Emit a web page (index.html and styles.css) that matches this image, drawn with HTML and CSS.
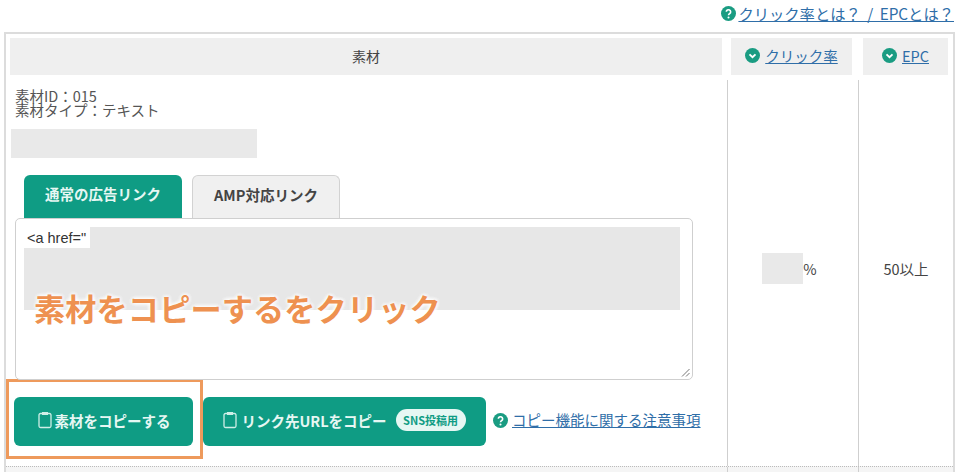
FILE: index.html
```html
<!DOCTYPE html>
<html lang="ja">
<head>
<meta charset="utf-8">
<title>素材</title>
<link rel="stylesheet" href="styles.css">
</head>
<body>
<div class="help-row">
  <svg class="qicon" viewBox="0 0 16 16"><circle cx="8" cy="8" r="8" fill="#1a9c82"/><path d="M5.7 6.2a2.3 2.2 0 1 1 3.6 1.8c-.9.6-1.3 1-1.3 1.9" fill="none" stroke="#fff" stroke-width="1.7"/><circle cx="8" cy="12.2" r="1.1" fill="#fff"/></svg>
  <a class="link" href="#">クリック率とは？ / EPCとは？</a>
</div>
<div class="panel">
  <div class="heads">
    <div class="head head-main">素材</div>
    <div class="head head-rate">
      <svg class="cicon" viewBox="0 0 16 16"><circle cx="8" cy="8" r="8" fill="#1a9c82"/><path d="M4.8 6.8 8 9.8l3.2-3" fill="none" stroke="#fff" stroke-width="2"/></svg>
      <a class="link" href="#">クリック率</a>
    </div>
    <div class="head head-epc">
      <svg class="cicon" viewBox="0 0 16 16"><circle cx="8" cy="8" r="8" fill="#1a9c82"/><path d="M4.8 6.8 8 9.8l3.2-3" fill="none" stroke="#fff" stroke-width="2"/></svg>
      <a class="link" href="#">EPC</a>
    </div>
  </div>
  <div class="body">
    <div class="col-main">
      <p class="meta">素材ID：015<br>素材タイプ：テキスト</p>
      <div class="redact-title"></div>
      <div class="tabs">
        <div class="tab tab-on">通常の広告リンク</div>
        <div class="tab tab-off">AMP対応リンク</div>
      </div>
      <div class="code">
        <span class="code-text">&lt;a href="</span>
        <div class="redact-code"></div>
        <svg class="grip" viewBox="0 0 10 10"><path d="M9.5 2 2 9.500M9.500 6 6 9.500" stroke="#777" stroke-width="1"/></svg>
      </div>
      <div class="callout">素材をコピーするをクリック</div>
      <div class="actions">
        <div class="copy-frame">
          <button class="btn btn-copy">
            <svg class="clip" viewBox="0 0 14 18"><path d="M4 2.500H2.500a1.500 1.500 0 0 0-1.500 1.500v11a1.500 1.500 0 0 0 1.500 1.500h9a1.500 1.500 0 0 0 1.500-1.500v-11a1.500 1.500 0 0 0-1.500-1.500H10" fill="none" stroke="#cfeee7" stroke-width="1.300"/><rect x="4" y="1" width="6" height="3" fill="#cfeee7"/></svg>
            素材をコピーする
          </button>
        </div>
        <button class="btn btn-link">
          <svg class="clip" viewBox="0 0 14 18"><path d="M4 2.500H2.500a1.500 1.500 0 0 0-1.500 1.500v11a1.500 1.500 0 0 0 1.500 1.500h9a1.500 1.500 0 0 0 1.500-1.500v-11a1.500 1.500 0 0 0-1.500-1.500H10" fill="none" stroke="#cfeee7" stroke-width="1.300"/><rect x="4" y="1" width="6" height="3" fill="#cfeee7"/></svg>
          リンク先URLをコピー
          <span class="pill">SNS投稿用</span>
        </button>
        <svg class="qicon" viewBox="0 0 16 16"><circle cx="8" cy="8" r="8" fill="#1a9c82"/><path d="M5.700 6.200a2.300 2.200 0 1 1 3.600 1.800c-.9.600-1.300 1-1.300 1.900" fill="none" stroke="#fff" stroke-width="1.700"/><circle cx="8" cy="12.200" r="1.100" fill="#fff"/></svg>
        <a class="link note" href="#">コピー機能に関する注意事項</a>
      </div>
    </div>
    <div class="col-rate"><span class="redact-rate"></span><span>%</span></div>
    <div class="col-epc">50以上</div>
  </div>
  <div class="foot">
    <div class="foot-main"></div>
    <div class="foot-rate"></div>
    <div class="foot-epc"></div>
  </div>
</div>
</body>
</html>
```

FILE: styles.css
```css
* { box-sizing: border-box; }
html, body { margin: 0; padding: 0; }
body {
  width: 960px;
  height: 472px;
  overflow: hidden;
  background: #fff;
  color: #444;
  font-family: "Noto Sans CJK JP", "Noto Sans", sans-serif;
  font-size: 14.5px;
}
.link { color: #2f6ea8; text-decoration: underline; }
.help-row {
  height: 32px;
  padding: 3px 6px 0 0;
  display: flex;
  justify-content: flex-end;
  align-items: flex-start;
  gap: 2px;
  font-size: 15.3px;
  word-spacing: 3px;
  line-height: 20px;
}
.qicon { width: 15px; height: 15px; flex: none; margin-top: 3px; }
.cicon { width: 15px; height: 15px; flex: none; }
.panel {
  margin-left: 4px;
  width: 951px;
  height: 440px;
  border: solid #dcdcdc;
  border-width: 2px 2px 0 2px;
}
.heads { display: flex; padding: 4px 4px 0 4px; height: 46px; }
.head {
  height: 37px;
  background: #efefef;
  display: flex;
  align-items: center;
  justify-content: center;
  gap: 5px;
  padding-bottom: 2px;
}
.head-main { width: 712px; font-size: 14px; }
.head-rate { width: 121px; margin-left: 9px; }
.head-epc { width: 85px; margin-left: 11px; }
.body { display: flex; height: 386px; }
.col-main { width: 721px; padding: 9px 0 0 9px; position: relative; flex: none; }
.meta { margin: 0; font-size: 14.5px; line-height: 14px; color: #555; }
.redact-title { margin: 12px 0 0 -4px; width: 246px; height: 29px; background: #e9e9e9; }
.tabs { display: flex; gap: 10px; margin: 17px 0 0 9px; height: 43px; }
.tab {
  width: 158px;
  border-radius: 6px 6px 0 0;
  display: flex;
  align-items: center;
  justify-content: center;
  font-weight: 700;
  font-size: 14.5px;
  padding-bottom: 6px;
}
.tab-on { background: #0f9c84; color: #e6f7f3; }
.tab-off { width: 148px; background: #f0f0f0; border: 1px solid #d2d2d2; border-bottom: 0; color: #444; }
.code {
  position: relative;
  width: 678px;
  height: 162px;
  border: 1px solid #cfcfcf;
  border-radius: 5px;
  background: #fff;
  padding: 10px 11px;
}
.code-text { display: block; font-size: 14.5px; line-height: 18px; color: #333; font-family: "Liberation Sans", sans-serif; }
.redact-code {
  position: absolute;
  left: 8px;
  top: 8px;
  width: 656px;
  height: 83px;
  background: #e7e7e7;
  clip-path: polygon(66px 0, 100% 0, 100% 100%, 0 100%, 0 21px, 66px 21px);
}
.grip { position: absolute; right: 2px; bottom: 2px; width: 10px; height: 10px; }
.callout {
  position: absolute;
  left: 28px;
  top: 210px;
  font-size: 31.2px;
  line-height: 36px;
  font-weight: 700;
  color: #ee9150;
  letter-spacing: 0.1px;
  text-shadow: 0 0 4px #fff, 0 0 4px #fff, 0 0 4px #fff;
  white-space: nowrap;
}
.actions { display: flex; align-items: flex-start; margin: -1px 0 0 -9px; height: 80px; }
.copy-frame {
  width: 197px;
  height: 80px;
  border: 3px solid #ee9a5c;
  padding: 15px 0 0 5px;
  flex: none;
}
.btn {
  height: 49px;
  border: 0;
  border-radius: 6px;
  background: #0f9c84;
  color: #e6f7f3;
  font-family: inherit;
  font-weight: 700;
  font-size: 14.5px;
  display: flex;
  align-items: center;
  justify-content: center;
  gap: 3px;
  flex: none;
  padding-top: 0;
  padding-bottom: 3px;
}
.btn-copy { width: 179px; padding-right: 5px; }
.btn-link { width: 283px; margin: 18px 7px 0 0; gap: 4px; }
.clip { width: 14px; height: 18px; flex: none; }
.pill {
  margin-left: 5px;
  height: 22px;
  width: 70px;
  border-radius: 11px;
  background: #e6f7f3;
  color: #0f9c84;
  font-size: 11px;
  line-height: 22px;
  text-align: center;
}
.actions .qicon { margin: 34px 4px 0 0; }
.note { font-size: 14.5px; margin-top: 31px; line-height: 20px; }
.col-rate {
  width: 131px;
  flex: none;
  border-left: 1px solid #cfcfcf;
  display: flex;
  align-items: center;
  justify-content: center;
  padding: 0 7px 9px 0;
}
.redact-rate { width: 41px; height: 31px; background: #e9e9e9; }
.col-epc {
  flex: 1;
  border-left: 1px solid #cfcfcf;
  display: flex;
  align-items: center;
  justify-content: center;
  padding-bottom: 9px;
}
.foot { display: flex; border-top: 1px dotted #bbb; height: 6px; background: #f5f5f5; }
.foot-main { width: 721px; flex: none; }
.foot-rate { width: 131px; flex: none; border-left: 1px solid #cfcfcf; }
.foot-epc { flex: 1; border-left: 1px solid #cfcfcf; }
```
